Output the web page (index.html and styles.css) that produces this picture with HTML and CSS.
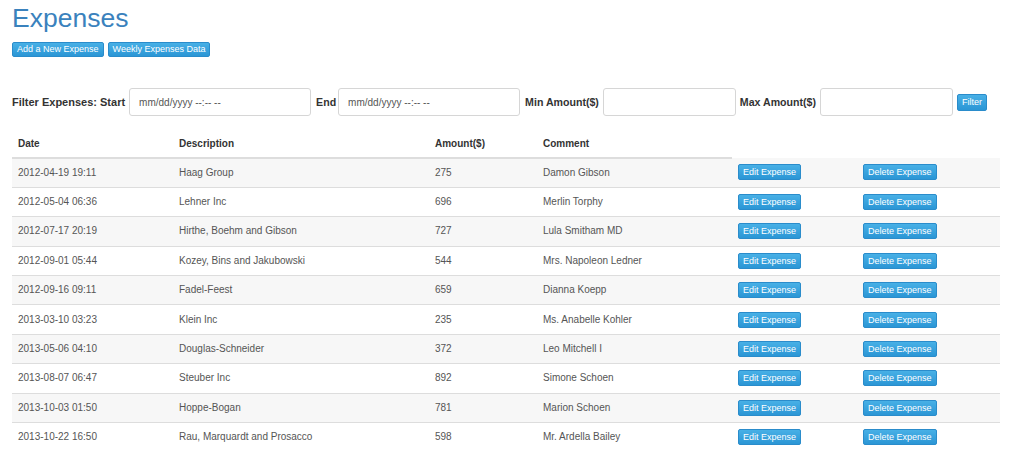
FILE: index.html
```html
<!DOCTYPE html>
<html>
<head>
<meta charset="utf-8">
<title>Expenses</title>
<link rel="stylesheet" href="styles.css">
</head>
<body>
<div class="page">
  <h1 class="title">Expenses</h1>
  <div class="top-actions">
    <button class="btn">Add a New Expense</button>
    <button class="btn">Weekly Expenses Data</button>
  </div>

  <form class="filter">
    <label class="lbl lbl-main">Filter Expenses: Start</label>
    <input class="field field-date" type="text" placeholder="mm/dd/yyyy --:-- --">
    <label class="lbl lbl-end">End</label>
    <input class="field field-date" type="text" placeholder="mm/dd/yyyy --:-- --">
    <label class="lbl">Min Amount($)</label>
    <input class="field field-amt" type="text">
    <label class="lbl">Max Amount($)</label>
    <input class="field field-amt" type="text">
    <button class="btn" type="button">Filter</button>
  </form>

  <table class="grid">
    <colgroup>
      <col class="c-date"><col class="c-desc"><col class="c-amt"><col class="c-com"><col class="c-edit"><col class="c-del">
    </colgroup>
    <thead>
      <tr><th>Date</th><th>Description</th><th>Amount($)</th><th>Comment</th></tr>
    </thead>
    <tbody>
      <tr><td>2012-04-19 19:11</td><td>Haag Group</td><td>275</td><td>Damon Gibson</td><td><button class="btn">Edit Expense</button></td><td><button class="btn">Delete Expense</button></td></tr>
      <tr><td>2012-05-04 06:36</td><td>Lehner Inc</td><td>696</td><td>Merlin Torphy</td><td><button class="btn">Edit Expense</button></td><td><button class="btn">Delete Expense</button></td></tr>
      <tr><td>2012-07-17 20:19</td><td>Hirthe, Boehm and Gibson</td><td>727</td><td>Lula Smitham MD</td><td><button class="btn">Edit Expense</button></td><td><button class="btn">Delete Expense</button></td></tr>
      <tr><td>2012-09-01 05:44</td><td>Kozey, Bins and Jakubowski</td><td>544</td><td>Mrs. Napoleon Ledner</td><td><button class="btn">Edit Expense</button></td><td><button class="btn">Delete Expense</button></td></tr>
      <tr><td>2012-09-16 09:11</td><td>Fadel-Feest</td><td>659</td><td>Dianna Koepp</td><td><button class="btn">Edit Expense</button></td><td><button class="btn">Delete Expense</button></td></tr>
      <tr><td>2013-03-10 03:23</td><td>Klein Inc</td><td>235</td><td>Ms. Anabelle Kohler</td><td><button class="btn">Edit Expense</button></td><td><button class="btn">Delete Expense</button></td></tr>
      <tr><td>2013-05-06 04:10</td><td>Douglas-Schneider</td><td>372</td><td>Leo Mitchell I</td><td><button class="btn">Edit Expense</button></td><td><button class="btn">Delete Expense</button></td></tr>
      <tr><td>2013-08-07 06:47</td><td>Steuber Inc</td><td>892</td><td>Simone Schoen</td><td><button class="btn">Edit Expense</button></td><td><button class="btn">Delete Expense</button></td></tr>
      <tr><td>2013-10-03 01:50</td><td>Hoppe-Bogan</td><td>781</td><td>Marion Schoen</td><td><button class="btn">Edit Expense</button></td><td><button class="btn">Delete Expense</button></td></tr>
      <tr><td>2013-10-22 16:50</td><td>Rau, Marquardt and Prosacco</td><td>598</td><td>Mr. Ardella Bailey</td><td><button class="btn">Edit Expense</button></td><td><button class="btn">Delete Expense</button></td></tr>
    </tbody>
  </table>
</div>
</body>
</html>
```

FILE: styles.css
```css
* { box-sizing: border-box; }

html, body {
  margin: 0;
  padding: 0;
  background: #ffffff;
}

body {
  font-family: "Liberation Sans", Arial, sans-serif;
  font-size: 10px;
  color: #555555;
}

.page {
  padding: 3px 24px 0 12px;
}

.title {
  margin: 0;
  font-size: 26.5px;
  line-height: 30px;
  font-weight: normal;
  color: #3a82bd;
}

.top-actions {
  display: flex;
  gap: 4px;
  margin-top: 9px;
}

.btn {
  font-family: "Liberation Sans", Arial, sans-serif;
  font-size: 9px;
  line-height: 14px;
  height: 16px;
  padding: 0 4px;
  color: #ffffff;
  background: linear-gradient(#48b0e6, #2b96d5);
  border: 1px solid #2a8ccb;
  border-radius: 2px;
  white-space: nowrap;
  cursor: pointer;
}

.top-actions .btn {
  height: 15px;
  line-height: 13px;
  padding: 0 4px;
}

.filter {
  display: flex;
  align-items: center;
  margin-top: 31px;
  height: 28px;
}

.lbl {
  font-size: 10.6px;
  font-weight: bold;
  color: #333333;
  white-space: nowrap;
  margin-right: 4px;
}

.lbl-main { font-size: 11px; }
.lbl-end { margin-right: 2px; }

.field {
  height: 28px;
  border: 1px solid #d6d6d6;
  border-radius: 3px;
  padding: 0 9px;
  font-family: "Liberation Sans", Arial, sans-serif;
  font-size: 10px;
  color: #555555;
  background: #fff;
  margin-right: 5px;
}

.field::placeholder {
  color: #555555;
}

.field-date { width: 182px; }
.field-amt { width: 133px; margin-right: 4px; }

.filter .btn {
  height: 17px;
  line-height: 15px;
}

.grid {
  margin-top: 13px;
  width: 988px;
  border-collapse: collapse;
  table-layout: fixed;
}

.c-date { width: 161px; }
.c-desc { width: 256px; }
.c-amt { width: 108px; }
.c-com { width: 195px; }
.c-edit { width: 125px; }
.c-del { width: 143px; }

.grid th {
  text-align: left;
  font-weight: bold;
  color: #333333;
  padding: 8px 6px 6px;
  line-height: 14px;
  border-bottom: 2px solid #dddddd;
}

.grid td {
  padding: 0 6px;
  line-height: 14px;
  height: 29.4px;
  border-top: 1px solid #dddddd;
  vertical-align: middle;
  white-space: nowrap;
}

.grid tbody tr:first-child td {
  border-top: none;
}

.grid tbody tr:nth-child(odd) td {
  background: #f7f7f7;
}

.grid td .btn {
  display: block;
}
```
